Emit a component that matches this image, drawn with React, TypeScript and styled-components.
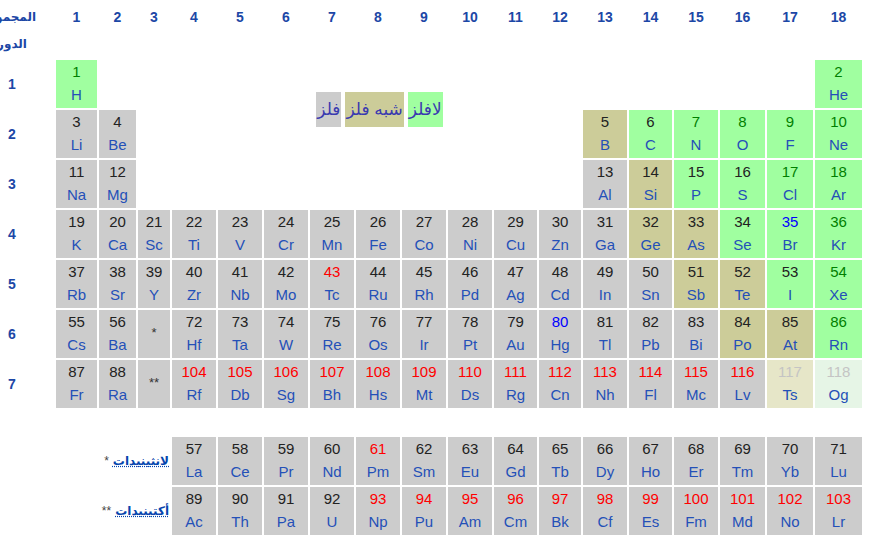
import React from "react";
import styled, { createGlobalStyle } from "styled-components";

const GlobalStyle = createGlobalStyle`
  body {
    margin: 0;
    background: #fff;
    font-family: "Liberation Sans", "DejaVu Sans", Arial, sans-serif;
    overflow: hidden;
  }
`;

const SYMBOLS =
  "H He Li Be B C N O F Ne Na Mg Al Si P S Cl Ar K Ca Sc Ti V Cr Mn Fe Co Ni Cu Zn Ga Ge As Se Br Kr Rb Sr Y Zr Nb Mo Tc Ru Rh Pd Ag Cd In Sn Sb Te I Xe Cs Ba La Ce Pr Nd Pm Sm Eu Gd Tb Dy Ho Er Tm Yb Lu Hf Ta W Re Os Ir Pt Au Hg Tl Pb Bi Po At Rn Fr Ra Ac Th Pa U Np Pu Am Cm Bk Cf Es Fm Md No Lr Rf Db Sg Bh Hs Mt Ds Rg Cn Nh Fl Mc Lv Ts Og".split(
    " "
  );

type Kind = "metal" | "metalloid" | "nonmetal" | "ts" | "og";
type State = "solid" | "gas" | "liquid" | "synthetic" | "unknown";

const METALLOIDS = [5, 14, 32, 33, 51, 52, 84, 85];
const NONMETALS = [1, 2, 6, 7, 8, 9, 10, 15, 16, 17, 18, 34, 35, 36, 53, 54, 86];
const GASES = [1, 2, 7, 8, 9, 10, 17, 18, 36, 54, 86];
const LIQUIDS = [35, 80];

const kindOf = (z: number): Kind => {
  if (z === 117) return "ts";
  if (z === 118) return "og";
  if (METALLOIDS.includes(z)) return "metalloid";
  if (NONMETALS.includes(z)) return "nonmetal";
  return "metal";
};

const stateOf = (z: number): State => {
  if (z === 117 || z === 118) return "unknown";
  if (GASES.includes(z)) return "gas";
  if (LIQUIDS.includes(z)) return "liquid";
  if (z === 43 || z === 61 || z >= 93) return "synthetic";
  return "solid";
};

// returns [group, grid row]; rows 3..9 are periods, 11/12 are the f-block rows
const placeOf = (z: number): [number, number] => {
  if (z === 1) return [1, 3];
  if (z === 2) return [18, 3];
  if (z <= 4) return [z - 2, 4];
  if (z <= 10) return [z + 8, 4];
  if (z <= 12) return [z - 10, 5];
  if (z <= 18) return [z, 5];
  if (z <= 36) return [z - 18, 6];
  if (z <= 54) return [z - 36, 7];
  if (z <= 56) return [z - 54, 8];
  if (z <= 71) return [z - 53, 11];
  if (z <= 86) return [z - 68, 8];
  if (z <= 88) return [z - 86, 9];
  if (z <= 103) return [z - 85, 12];
  return [z - 100, 9];
};

const bg: Record<Kind, string> = {
  metal: "#cccccc",
  metalloid: "#cccc99",
  nonmetal: "#a0ffa0",
  ts: "#e6e6c8",
  og: "#e6f5e6",
};

const numColor: Record<State, string> = {
  solid: "#222222",
  gas: "#008000",
  liquid: "#0000ff",
  synthetic: "#ff0000",
  unknown: "#c4c4c4",
};

const Table = styled.div`
  display: grid;
  grid-template-columns: 54px 41px 37px 32px 44px 44px 44px 44px 44px 44px 44px 43px 42px 44px 43px 44px 45px 46px 47px;
  grid-template-rows: 34px 22px repeat(7, 48px) 25px 48px 48px;
  gap: 2px;
`;

const GroupNum = styled.div<{ $col: number }>`
  grid-column: ${({ $col }) => $col};
  grid-row: 1;
  display: flex;
  align-items: center;
  justify-content: center;
  font-size: 14px;
  font-weight: bold;
  color: #1c47a6;
`;

const CornerLabel = styled.div<{ $row: number; $pad: number }>`
  grid-column: 1;
  grid-row: ${({ $row }) => $row};
  direction: rtl;
  white-space: nowrap;
  text-align: right;
  padding-right: ${({ $pad }) => $pad}px;
  font-size: 12px;
  font-weight: bold;
  color: #1c47a6;
  line-height: ${({ $row }) => ($row === 1 ? "34px" : "16px")};
`;

const PeriodNum = styled.div<{ $row: number }>`
  grid-column: 1;
  grid-row: ${({ $row }) => $row};
  display: flex;
  align-items: center;
  padding-left: 8px;
  font-size: 14px;
  font-weight: bold;
  color: #1c47a6;
`;

const Cell = styled.div<{ $col: number; $row: number; $kind: Kind }>`
  grid-column: ${({ $col }) => $col};
  grid-row: ${({ $row }) => $row};
  background: ${({ $kind }) => bg[$kind]};
  display: flex;
  flex-direction: column;
  align-items: center;
  font-size: 15px;
`;

const Num = styled.span<{ $state: State }>`
  line-height: 23px;
  color: ${({ $state }) => numColor[$state]};
`;

const Sym = styled.span`
  line-height: 24px;
  color: #2450b8;
`;

const StarCell = styled.div<{ $row: number }>`
  grid-column: 4;
  grid-row: ${({ $row }) => $row};
  background: #cccccc;
  display: flex;
  align-items: center;
  justify-content: center;
  font-size: 13px;
  color: #333;
  padding-bottom: 4px;
`;

const Legend = styled.div`
  grid-column: 5 / 14;
  grid-row: 3 / 5;
  align-self: center;
  justify-self: center;
  margin-left: 6px;
  display: flex;
  direction: rtl;
  gap: 4px;
`;

const LegendItem = styled.span<{ $kind: Kind }>`
  background: ${({ $kind }) => bg[$kind]};
  height: 35px;
  line-height: 35px;
  padding: 0 1px;
  font-size: 17px;
  color: #3a3ab0;
  white-space: nowrap;
`;

const SeriesLabel = styled.div<{ $row: number }>`
  grid-column: 1 / 5;
  grid-row: ${({ $row }) => $row};
  direction: rtl;
  display: flex;
  align-items: center;
  padding-right: 1px;
  white-space: nowrap;
  font-size: 12px;
  color: #444;
`;

const SeriesLink = styled.span`
  color: #0645ad;
  font-weight: bold;
  text-decoration: underline dotted;
  margin-left: 4px;
`;

const groups = Array.from({ length: 18 }, (_, i) => i + 1);
const periods = Array.from({ length: 7 }, (_, i) => i + 1);

export default function App() {
  return (
    <>
      <GlobalStyle />
      <Table>
        <CornerLabel $row={1} $pad={18}>
          المجموعة
        </CornerLabel>
        <CornerLabel $row={2} $pad={27}>
          الدورة
        </CornerLabel>
        {groups.map((g) => (
          <GroupNum key={g} $col={g + 1}>
            {g}
          </GroupNum>
        ))}
        {periods.map((p) => (
          <PeriodNum key={p} $row={p + 2}>
            {p}
          </PeriodNum>
        ))}

        <Legend>
          <LegendItem $kind="nonmetal">لافلز</LegendItem>
          <LegendItem $kind="metalloid">شبه فلز</LegendItem>
          <LegendItem $kind="metal">فلز</LegendItem>
        </Legend>

        {SYMBOLS.map((sym, i) => {
          const z = i + 1;
          const [g, row] = placeOf(z);
          return (
            <Cell key={z} $col={g + 1} $row={row} $kind={kindOf(z)}>
              <Num $state={stateOf(z)}>{z}</Num>
              <Sym>{sym}</Sym>
            </Cell>
          );
        })}

        <StarCell $row={8}>*</StarCell>
        <StarCell $row={9}>**</StarCell>

        <SeriesLabel $row={11}>
          <SeriesLink>لانثينيدات</SeriesLink>*
        </SeriesLabel>
        <SeriesLabel $row={12}>
          <SeriesLink>أكتينيدات</SeriesLink>**
        </SeriesLabel>
      </Table>
    </>
  );
}
